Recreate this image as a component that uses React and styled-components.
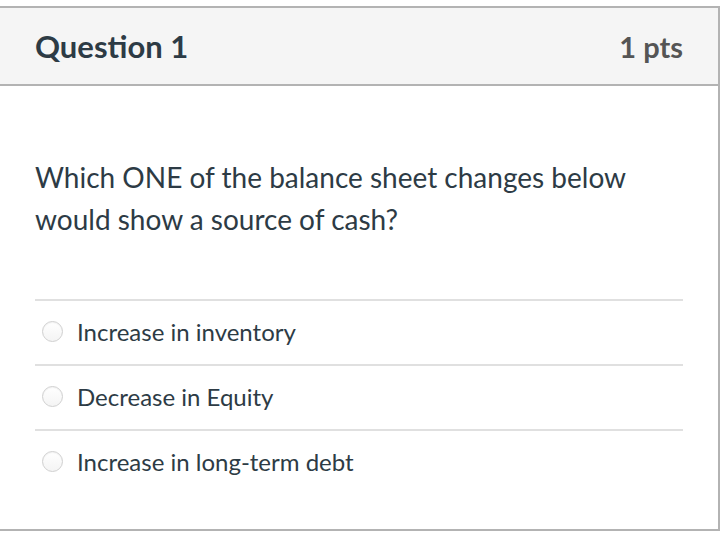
import React from "react";
import styled, { createGlobalStyle } from "styled-components";

const GlobalStyle = createGlobalStyle`
  body {
    margin: 0;
    background: #fff;
    font-family: Lato, "Open Sans", sans-serif;
    color: #2d3b45;
  }
`;

const Card = styled.div`
  margin: 6px 0 0 -2px;
  width: 718px;
  border: 2px solid #b3b3b3;
  background: #fff;
`;

const Header = styled.div`
  display: flex;
  align-items: center;
  justify-content: space-between;
  height: 76px;
  padding: 0 35px;
  background: #f5f5f5;
  border-bottom: 2px solid #b3b3b3;
`;

const Title = styled.div`
  font-size: 31px;
  font-weight: 700;
  color: #2d3b45;
`;

const Points = styled.div`
  font-size: 29px;
  font-weight: 700;
  color: #555;
`;

const Body = styled.div`
  padding: 70px 35px 35px;
`;

const Prompt = styled.p`
  margin: 0 0 59px;
  font-size: 28px;
  line-height: 42px;
  color: #2d3b45;
`;

const Answer = styled.label`
  display: flex;
  align-items: center;
  gap: 14px;
  box-sizing: border-box;
  height: 65px;
  padding: 0 0 2px 7px;
  border-top: 2px solid #e0e0e0;
  font-size: 24px;
  color: #2d3b45;
`;

const Radio = styled.span`
  width: 19px;
  height: 19px;
  border-radius: 50%;
  border: 1px solid #d0d0d0;
  background: linear-gradient(#fff, #f4f4f4);
  box-shadow: inset 0 1px 1px rgba(0, 0, 0, 0.05);
  flex-shrink: 0;
`;

const answers = [
  "Increase in inventory",
  "Decrease in Equity",
  "Increase in long-term debt",
];

export default function App() {
  return (
    <>
      <GlobalStyle />
      <Card>
        <Header>
          <Title>Question 1</Title>
          <Points>1 pts</Points>
        </Header>
        <Body>
          <Prompt>
            Which ONE of the balance sheet changes below
            <br />
            would show a source of cash?
          </Prompt>
          {answers.map((a) => (
            <Answer key={a}>
              <Radio />
              {a}
            </Answer>
          ))}
        </Body>
      </Card>
    </>
  );
}
